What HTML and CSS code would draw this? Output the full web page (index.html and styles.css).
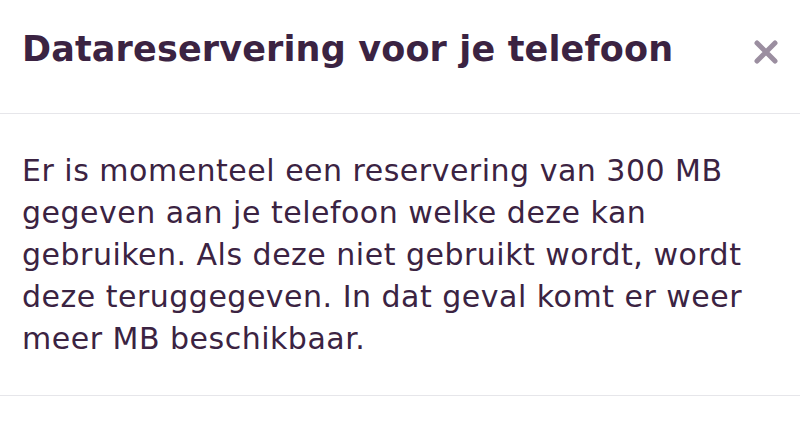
FILE: index.html
```html
<!DOCTYPE html>
<html lang="nl">
<head>
<meta charset="utf-8">
<link rel="stylesheet" href="styles.css">
</head>
<body>
<div class="sheet">
  <header class="head">
    <h1 class="title">Datareservering voor je telefoon</h1>
    <button class="close" aria-label="Sluiten">
      <svg width="24" height="24" viewBox="0 0 24 24"><path d="M3 3L21 21M21 3L3 21" stroke="#9b8ea0" stroke-width="5" stroke-linecap="round"/></svg>
    </button>
  </header>
  <div class="content">
    <p class="text">Er is momenteel een reservering van 300 MB gegeven aan je telefoon welke deze kan gebruiken. Als deze niet gebruikt wordt, wordt deze teruggegeven. In dat geval komt er weer meer MB beschikbaar.</p>
  </div>
</div>
</body>
</html>
```

FILE: styles.css
```css
html, body { margin: 0; padding: 0; background: #ffffff; }
body { font-family: "DejaVu Sans", "Noto Sans", sans-serif; color: #3b2342; }
.sheet { width: 800px; height: 439px; display: flex; flex-direction: column; }
.head {
  height: 114px; box-sizing: border-box;
  display: flex; align-items: center; justify-content: space-between;
  padding: 0 22px 0 22px;
  border-bottom: 1.5px solid #e6e6ea;
}
.title { margin: 0; font-size: 35px; font-weight: 700; letter-spacing: 0.15px; line-height: 1; padding-bottom: 14px; }
.close { border: 0; background: none; padding: 0; width: 24px; height: 24px; display: flex; margin-bottom: 9px; }
.content { height: 282px; box-sizing: border-box; border-bottom: 1.5px solid #e6e6ea; padding: 0 20px 0 22px; }
.text { margin: 0; padding-top: 36px; font-size: 30px; line-height: 42px; letter-spacing: 0.5px; max-width: 760px; }
```
